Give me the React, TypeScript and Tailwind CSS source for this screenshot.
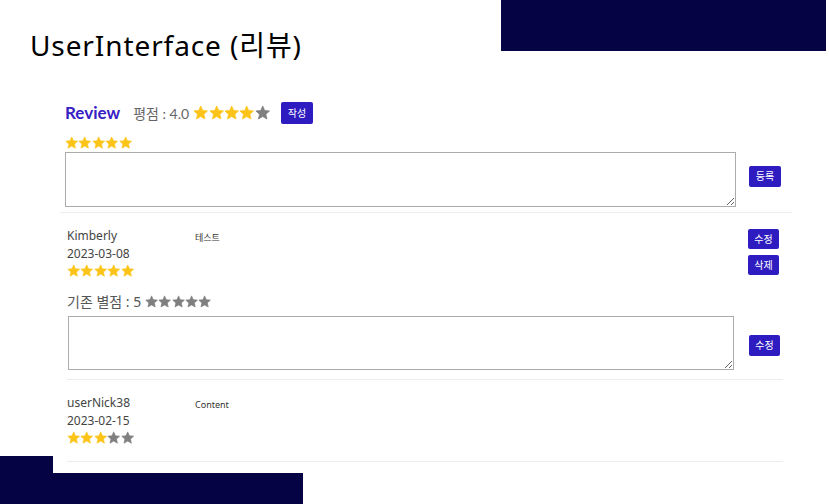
import React from "react";

const sans = 'font-["Noto_Sans","Noto_Sans_CJK_KR",sans-serif]';
const lato = 'font-["Lato","Noto_Sans_CJK_KR",sans-serif]';

function Star({ on, className }: { on: boolean; className: string }) {
  const c = on ? "#fcc419" : "#7f7f7f";
  return (
    <svg viewBox="0 0 24 24" className={className} fill={c} stroke={c} strokeWidth="1.2" strokeLinejoin="round">
      <path d="M12 1.6L15.06 8.59L22.6 9.3L16.95 14.41L18.6 21.8L12 18L5.4 21.8L7.05 14.41L1.4 9.3L8.94 8.59Z" />
    </svg>
  );
}

function Stars({ value, className }: { value: number; className: string }) {
  return (
    <div className="flex">
      {[1, 2, 3, 4, 5].map((i) => (
        <Star key={i} on={i <= value} className={className} />
      ))}
    </div>
  );
}

function Btn({ label, className = "" }: { label: string; className?: string }) {
  return (
    <button
      type="button"
      className={`flex items-center justify-center rounded-[2px] bg-[#2e1cc0] text-[10px] text-white ${sans} ${className}`}
    >
      {label}
    </button>
  );
}

type Review = { name: string; date: string; score: number; content: string; editing?: boolean };

const reviews: Review[] = [
  { name: "Kimberly", date: "2023-03-08", score: 5, content: "테스트", editing: true },
  { name: "userNick38", date: "2023-02-15", score: 3, content: "Content" },
];

function ReviewItem({ r }: { r: Review }) {
  return (
    <div className="border-b border-[#ececec]">
      <div className="flex pt-[14px]">
        <div className={`w-[128px] text-[12px] leading-[18px] text-[#444] ${sans}`}>
          <div>{r.name}</div>
          <div>{r.date}</div>
          <div className="mt-[1px]">
            <Stars value={r.score} className="h-[13.4px] w-[13.4px]" />
          </div>
        </div>
        <div className={`mt-[3px] flex-1 text-[9px] leading-[15px] text-[#333] ${sans}`}>{r.content}</div>
        {r.editing ? (
          <div className="mr-[4px] mt-[2px] flex flex-col gap-[6px]">
            <Btn label="수정" className="h-[20px] w-[31px]" />
            <Btn label="삭제" className="h-[20px] w-[31px]" />
          </div>
        ) : null}
      </div>
      {r.editing ? (
        <div className="pb-[9px]">
          <div className={`mt-[14px] flex items-center text-[14px] leading-[20px] text-[#555] ${sans}`}>
            <span className="mr-[4px]">기존 별점 : {r.score}</span>
            <Stars value={0} className="h-[13.2px] w-[13.2px]" />
          </div>
          <div className="mt-[4px] flex items-start">
            <textarea className="ml-[1px] h-[54px] w-[666px] resize-y border border-[#ababab] bg-white" />
            <Btn label="수정" className="ml-[15px] mt-[19px] h-[21px] w-[31px]" />
          </div>
        </div>
      ) : (
        <div className="h-[17px]" />
      )}
    </div>
  );
}

export default function App() {
  return (
    <div className="relative h-[504px] w-[829px] overflow-hidden bg-white">
      <div className="absolute right-[3px] top-0 h-[51px] w-[325px] bg-[#060345]" />
      <div className="absolute bottom-0 left-0 h-[48px] w-[53px] bg-[#060345]" />
      <div className="absolute bottom-0 left-0 h-[31px] w-[303px] bg-[#060345]" />

      <h1 className={`pl-[30px] pt-[28px] text-[28px] leading-[34px] tracking-[0.9px] text-black ${sans}`}>
        UserInterface (리뷰)
      </h1>

      <div className="relative ml-[60px] mt-[40px] w-[732px]">
        <div className={`flex h-[22px] items-center pl-[5px] ${lato}`}>
          <span className="text-[17px] font-bold text-[#3620c4]">Review</span>
          <span className="ml-[13px] text-[14px] text-[#666]">평점 : 4.0</span>
          <div className="ml-[4px]">
            <Stars value={4} className="h-[15.4px] w-[15.4px]" />
          </div>
          <Btn label="작성" className="ml-[11px] h-[22px] w-[32px]" />
        </div>

        <div className="mt-[12px] pl-[5px]">
          <Stars value={5} className="h-[13.4px] w-[13.4px]" />
        </div>

        <div className="mt-[3px] flex items-start pl-[5px]">
          <textarea className="h-[55px] w-[671px] resize-y border border-[#ababab] bg-white" />
          <Btn label="등록" className="ml-[13px] mt-[14px] h-[21px] w-[32px]" />
        </div>

        <div className="mt-[5px] border-t border-[#ececec]" />

        <div className="ml-[7px] w-[716px]">
          {reviews.map((r) => (
            <ReviewItem key={r.name} r={r} />
          ))}
        </div>
      </div>
    </div>
  );
}
